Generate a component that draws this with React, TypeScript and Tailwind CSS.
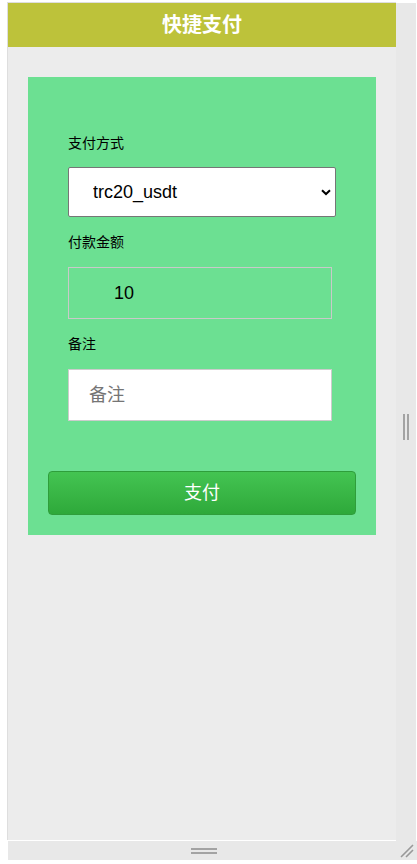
import React from "react";

const font = "font-['Liberation_Sans','Noto_Sans_CJK_SC',sans-serif]";

function Field({ label, children, first }: { label: string; children: React.ReactNode; first?: boolean }) {
    return (
        <div className={first ? "" : "mt-[15px]"}>
            <label className={`block text-[14px] leading-5 text-black ${first ? "mb-[14px]" : "mb-[15px]"}`}>{label}</label>
            {children}
        </div>
    );
}

export default function App() {
    return (
        <div className={`w-[417px] h-[864px] bg-white overflow-hidden ${font}`}>
            <div className="pt-[2px] pl-[7px] flex flex-col">
                <div className="flex">
                    {/* device viewport */}
                    <div className="w-[389px] h-[838px] border-t border-l border-[#dedede] bg-[#ececec] flex flex-col">
                        <header className="h-[44px] bg-[#bdc23a] flex items-center justify-center">
                            <h1 className="text-white text-[20px] font-bold">快捷支付</h1>
                        </header>

                        <div className="px-5 pt-[30px]">
                            <form className="bg-[#6ce092] pt-[56px] px-5 pb-5">
                                <div className="px-5">
                                    <Field label="支付方式" first>
                                        <div className="relative w-[268px] h-[50px]">
                                            <select
                                                defaultValue="trc20_usdt"
                                                className="appearance-none w-full h-full bg-white border border-[#767676] rounded-[2px] pl-[24px] text-[18px] text-black outline-none"
                                            >
                                                <option value="trc20_usdt">trc20_usdt</option>
                                            </select>
                                            <svg
                                                className="absolute right-[5px] top-[22px] pointer-events-none"
                                                width="10"
                                                height="7"
                                                viewBox="0 0 10 7"
                                            >
                                                <path d="M1 1.2 L5 5 L9 1.2" fill="none" stroke="#000" strokeWidth="2" />
                                            </svg>
                                        </div>
                                    </Field>

                                    <Field label="付款金额">
                                        <input
                                            type="text"
                                            defaultValue="10"
                                            className="block w-[264px] h-[52px] bg-transparent border border-[#c9c9c9] pl-[45px] text-[18px] text-black outline-none"
                                        />
                                    </Field>

                                    <Field label="备注">
                                        <input
                                            type="text"
                                            placeholder="备注"
                                            className="block w-[264px] h-[52px] bg-white border border-[#cccccc] pl-[20px] text-[18px] text-black placeholder:text-[#757575] outline-none"
                                        />
                                    </Field>
                                </div>

                                <button
                                    type="button"
                                    className="mt-[50px] w-full h-[44px] rounded-[4px] border border-[#2f9e3b] bg-gradient-to-b from-[#44c452] to-[#2ea93a] text-white text-[18px]"
                                >
                                    支付
                                </button>
                            </form>
                        </div>
                    </div>

                    {/* right resize strip */}
                    <div className="mt-[1px] w-[20px] h-[857px] bg-[#e8e8e8] flex items-center justify-center">
                        <div className="flex gap-[2px] h-[26px] -mt-[10px]">
                            <div className="w-[2px] h-full bg-[#a3a3a3]" />
                            <div className="w-[2px] h-full bg-[#a3a3a3]" />
                        </div>
                    </div>
                </div>

                {/* bottom resize strip */}
                <div className="-mt-[19px] ml-[1px] w-[409px] h-[19px] bg-[#e8e8e8] relative flex items-center justify-center">
                    <div className="flex flex-col gap-[2px] -ml-[18px]">
                        <div className="w-[26px] h-[2px] bg-[#a3a3a3]" />
                        <div className="w-[26px] h-[2px] bg-[#a3a3a3]" />
                    </div>
                    <svg className="absolute right-[3px] bottom-[2px]" width="14" height="14" viewBox="0 0 14 14">
                        <path d="M1 13 L13 1 M6 13 L13 6" stroke="#999" strokeWidth="1.6" />
                    </svg>
                </div>
            </div>
        </div>
    );
}
